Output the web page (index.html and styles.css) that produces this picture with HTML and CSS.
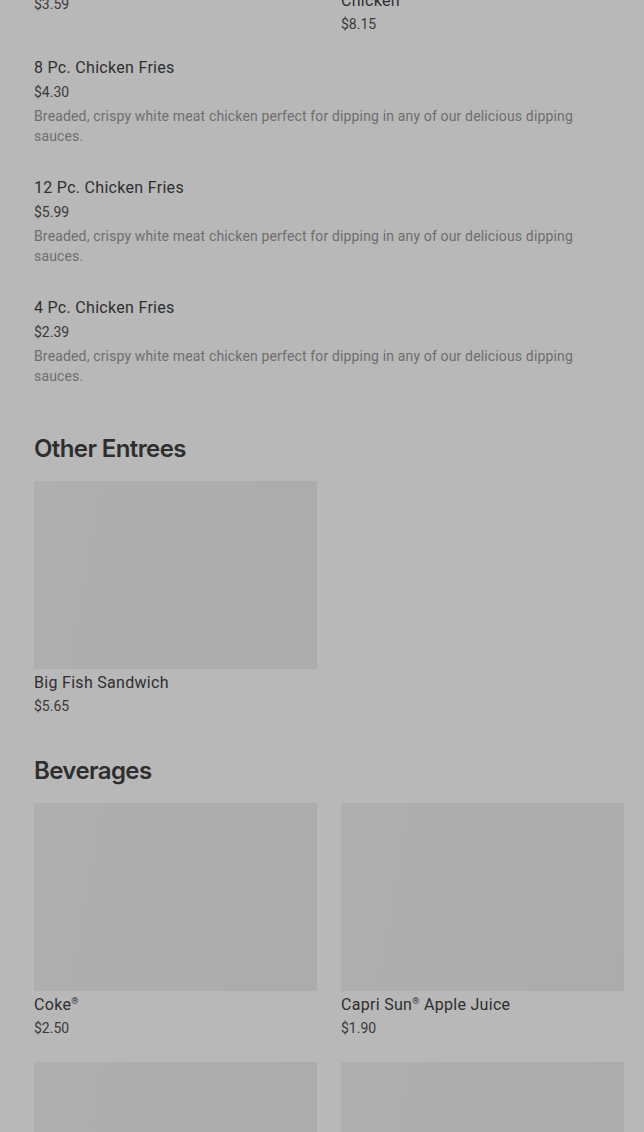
FILE: index.html
```html
<!DOCTYPE html>
<html lang="en">

<head>
    <meta charset="UTF-8">
    <meta name="viewport" content="width=device-width, initial-scale=1.0">
    <title>Menu</title>
    <link rel="stylesheet" href="styles.css">
</head>

<body>
    <main class="menu">
        <section class="section section-scrolled">
            <div class="grid">
                <div class="card">
                    <div class="card-img"></div>
                    <h3 class="item-name">Chicken Jr.</h3>
                    <p class="item-price">$3.59</p>
                </div>
                <div class="card">
                    <div class="card-img"></div>
                    <h3 class="item-name">Family Bundle 8 Pc. Crispy Fried Chicken</h3>
                    <p class="item-price">$8.15</p>
                </div>
            </div>
        </section>

        <section class="section list">
            <div class="list-item">
                <h3 class="item-name">8 Pc. Chicken Fries</h3>
                <p class="item-price">$4.30</p>
                <p class="item-desc">Breaded, crispy white meat chicken perfect for dipping in any of our delicious dipping sauces.</p>
            </div>
            <div class="list-item">
                <h3 class="item-name">12 Pc. Chicken Fries</h3>
                <p class="item-price">$5.99</p>
                <p class="item-desc">Breaded, crispy white meat chicken perfect for dipping in any of our delicious dipping sauces.</p>
            </div>
            <div class="list-item">
                <h3 class="item-name">4 Pc. Chicken Fries</h3>
                <p class="item-price">$2.39</p>
                <p class="item-desc">Breaded, crispy white meat chicken perfect for dipping in any of our delicious dipping sauces.</p>
            </div>
        </section>

        <section class="section">
            <h2 class="section-title">Other Entrees</h2>
            <div class="grid">
                <div class="card">
                    <div class="card-img"></div>
                    <h3 class="item-name">Big Fish Sandwich</h3>
                    <p class="item-price">$5.65</p>
                </div>
            </div>
        </section>

        <section class="section">
            <h2 class="section-title">Beverages</h2>
            <div class="grid">
                <div class="card">
                    <div class="card-img"></div>
                    <h3 class="item-name">Coke<sup>®</sup></h3>
                    <p class="item-price">$2.50</p>
                </div>
                <div class="card">
                    <div class="card-img"></div>
                    <h3 class="item-name">Capri Sun<sup>®</sup> Apple Juice</h3>
                    <p class="item-price">$1.90</p>
                </div>
                <div class="card">
                    <div class="card-img"></div>
                    <h3 class="item-name">Sprite<sup>®</sup></h3>
                    <p class="item-price">$2.50</p>
                </div>
                <div class="card">
                    <div class="card-img"></div>
                    <h3 class="item-name">Fanta<sup>®</sup> Orange</h3>
                    <p class="item-price">$2.50</p>
                </div>
            </div>
        </section>
    </main>
</body>

</html>
```

FILE: styles.css
```css
* {
    margin: 0;
    padding: 0;
    box-sizing: border-box;
}

html,
body {
    background-color: #b8b8b8;
    overflow: hidden;
}

body {
    font-family: Roboto, 'Liberation Sans', sans-serif;
    color: #2f2f2f;
}

.menu {
    width: 590px;
    margin-left: 34px;
}

.section {
    padding-bottom: 39px;
}

/* page is scrolled, top row only partly visible */
.section-scrolled {
    margin-top: -221px;
    padding-bottom: 0;
}

.list {
    padding-top: 24px;
    padding-bottom: 47px;
    display: flex;
    flex-direction: column;
    gap: 32px;
}

.section-title {
    font-family: Inter, 'Liberation Sans', sans-serif;
    font-size: 24px;
    font-weight: 600;
    line-height: 32px;
    letter-spacing: -0.6px;
    color: #2e2e2e;
    margin-bottom: 16px;
}

.grid {
    display: grid;
    grid-template-columns: repeat(2, 283px);
    column-gap: 24px;
    row-gap: 24px;
}

.card-img {
    height: 188px;
    background: linear-gradient(100deg, #afafaf 0%, #adadad 40%, #acacac 100%);
    margin-bottom: 4px;
}

.item-name {
    font-size: 16px;
    font-weight: 400;
    line-height: 20px;
    letter-spacing: 0.3px;
    color: #2f2f2f;
}

.item-name sup {
    font-size: 9px;
    vertical-align: 6px;
    line-height: 0;
}

.item-price {
    font-size: 14px;
    line-height: 20px;
    margin-top: 3px;
    color: #3a3a3a;
}

.list-item .item-price {
    margin-top: 4px;
}

.item-desc {
    max-width: 570px;
    font-size: 14px;
    line-height: 20px;
    letter-spacing: 0.15px;
    margin-top: 4px;
    color: #6e6e6e;
}
```
